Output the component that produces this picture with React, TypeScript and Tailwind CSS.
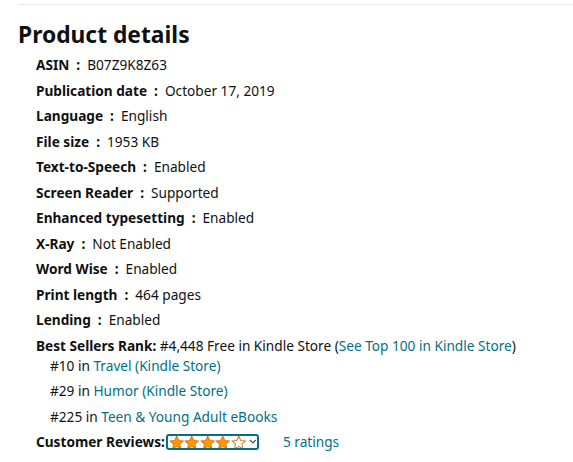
const details: [string, string][] = [
  ['ASIN', 'B07Z9K8Z63'],
  ['Publication date', 'October 17, 2019'],
  ['Language', 'English'],
  ['File size', '1953 KB'],
  ['Text-to-Speech', 'Enabled'],
  ['Screen Reader', 'Supported'],
  ['Enhanced typesetting', 'Enabled'],
  ['X-Ray', 'Not Enabled'],
  ['Word Wise', 'Enabled'],
  ['Print length', '464 pages'],
  ['Lending', 'Enabled'],
];

const ranks: [string, string][] = [
  ['#10', 'Travel (Kindle Store)'],
  ['#29', 'Humor (Kindle Store)'],
  ['#225', 'Teen & Young Adult eBooks'],
];

const Star = ({ filled }: { filled: boolean }) => (
  <svg width="16" height="15" viewBox="0 0 24 23">
    <path
      d="M12 1.5l3.1 6.9 7.4.7-5.6 5 1.7 7.4L12 17.6l-6.6 3.9 1.7-7.4-5.6-5 7.4-.7z"
      fill={filled ? '#ff9900' : '#fff'}
      stroke="#e47911"
      strokeWidth="1.6"
      strokeLinejoin="round"
    />
  </svg>
);

export default function App() {
  return (
    <div
      className="min-h-screen bg-white text-[#0f1111] text-[13.65px]"
      style={{ fontFamily: '"Noto Sans", "Open Sans", Arial, sans-serif' }}
    >
      <div className="pl-[18px] pt-[4px]">
        <hr className="border-t border-[#e7e7e7]" />
        <h2 className="mt-[14px] text-[22.8px] font-bold leading-[32px]">Product details</h2>
        <ul className="pl-[18px] mt-[4px]">
          {details.map(([label, value]) => (
            <li key={label} className="leading-5 mb-[5.5px]">
              <span className="font-bold">{label}</span>
              <span className="font-bold mx-[7px]">:</span>
              <span>{value}</span>
            </li>
          ))}
        </ul>
        <div className="pl-[18px]">
          <div className="leading-5">
            <span className="font-bold">Best Sellers Rank:</span> #4,448 Free in Kindle Store (
            <span className="text-[#007185]">See Top 100 in Kindle Store</span>)
          </div>
          <ul className="pl-[14px]">
            {ranks.map(([n, cat]) => (
              <li key={n} className="leading-5 mb-[5.5px]">
                {n} in <span className="text-[#007185]">{cat}</span>
              </li>
            ))}
          </ul>
          <div className="leading-5 flex items-center">
            <span className="font-bold">Customer Reviews:</span>
            <span className="ml-[1px] flex items-center h-[16px] w-[93px] border-2 border-[#007185] rounded-[3px] pl-[1px] overflow-hidden">
              <Star filled />
              <Star filled />
              <Star filled />
              <Star filled />
              <Star filled={false} />
              <svg className="ml-[3px]" width="8" height="6" viewBox="0 0 8 6">
                <path d="M1 1l3 3 3-3" fill="none" stroke="#555" strokeWidth="1.3" />
              </svg>
            </span>
            <span className="ml-[24px] text-[#007185]">5 ratings</span>
          </div>
        </div>
      </div>
    </div>
  );
}
